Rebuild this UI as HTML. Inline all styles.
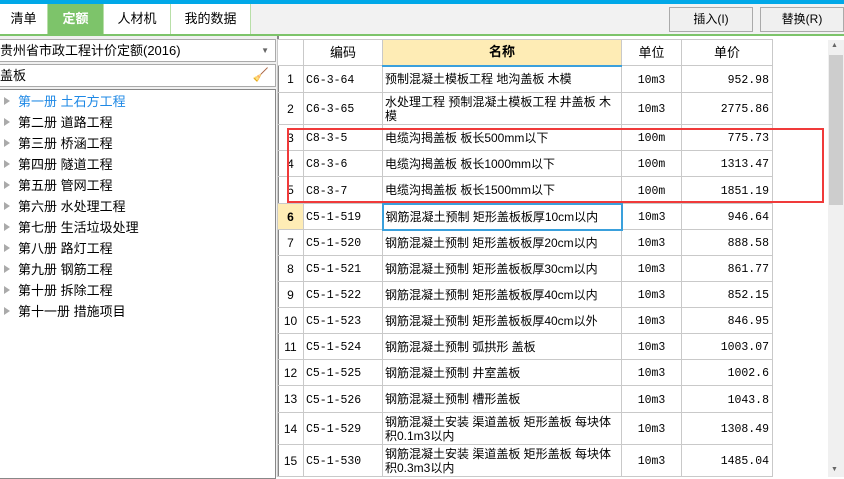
<!DOCTYPE html><html><head><meta charset="utf-8"><style>
*{box-sizing:border-box;margin:0;padding:0}
body{width:844px;height:477px;overflow:hidden;background:#fff;font-family:"Liberation Sans","Noto Sans CJK SC",sans-serif;font-size:13px;color:#000;position:relative}
.a{position:absolute}
.tab{position:absolute;top:4px;height:30px;line-height:30px;text-align:center;font-size:13px;border-right:1px solid #b8dfa8}
table{border-collapse:collapse;table-layout:fixed;position:absolute;left:277px;top:39px;font-size:12px}
td{border:1px solid #c9c9c9;padding:0 2px;overflow:hidden;line-height:14px;vertical-align:middle}
td.n{text-align:center}
td.c{font-family:"Liberation Mono","Noto Sans CJK SC",monospace;font-size:11.5px;padding-top:3px}
td.u{text-align:center;font-family:"Liberation Mono",monospace;font-size:11.5px;padding-top:3px}
td.p{text-align:right;font-family:"Liberation Mono",monospace;font-size:11.5px;padding-right:3px;padding-top:3px}
.tr{position:absolute;left:4px;height:21px;line-height:21px;font-size:13px}
.tr::before{content:"";display:inline-block;width:0;height:0;border-left:6px solid #aaa;border-top:4px solid transparent;border-bottom:4px solid transparent;margin-right:8px;vertical-align:1px}
</style></head><body>
<div class="a" style="left:0;top:0;width:844px;height:4px;background:#00a8e8"></div>
<div class="a" style="left:0;top:4px;width:844px;height:30px;background:#f2f2f2"></div>
<div class="a" style="left:0;top:34px;width:844px;height:2px;background:#7dc46a"></div>
<div class="tab" style="left:0;width:48px;background:#fff">清单</div>
<div class="tab" style="left:48px;width:56px;background:#7dc46a;color:#fff;font-weight:bold">定额</div>
<div class="tab" style="left:104px;width:67px;background:#fff">人材机</div>
<div class="tab" style="left:171px;width:80px;background:#fff">我的数据</div>
<div class="a" style="left:669px;top:7px;width:84px;height:25px;border:1px solid #aaa;background:#f0f0f0;text-align:center;line-height:23px;font-size:12px">插入(I)</div>
<div class="a" style="left:760px;top:7px;width:84px;height:25px;border:1px solid #aaa;background:#f0f0f0;text-align:center;line-height:23px;font-size:12px">替换(R)</div>
<div class="a" style="left:0;top:36px;width:277px;height:441px;background:#f0f0f0"></div>
<div class="a" style="left:-1px;top:39px;width:277px;height:23px;border:1px solid #aaa;background:#fff;line-height:21px;font-size:13px">贵州省市政工程计价定额(2016)<span style="position:absolute;right:6px;top:0;font-size:8px;color:#666">▼</span></div>
<div class="a" style="left:-1px;top:64px;width:277px;height:23px;border:1px solid #aaa;background:#fff;line-height:21px;font-size:13px">盖板<span style="position:absolute;right:6px;top:-1px;color:#b07a2a">🧹</span></div>
<div class="a" style="left:-1px;top:89px;width:277px;height:390px;border:1px solid #888;background:#fff"></div>
<div class="tr" style="top:91px;color:#1e88e5">第一册 土石方工程</div>
<div class="tr" style="top:112px">第二册 道路工程</div>
<div class="tr" style="top:133px">第三册 桥涵工程</div>
<div class="tr" style="top:154px">第四册 隧道工程</div>
<div class="tr" style="top:175px">第五册 管网工程</div>
<div class="tr" style="top:196px">第六册 水处理工程</div>
<div class="tr" style="top:217px">第七册 生活垃圾处理</div>
<div class="tr" style="top:238px">第八册 路灯工程</div>
<div class="tr" style="top:259px">第九册 钢筋工程</div>
<div class="tr" style="top:280px">第十册 拆除工程</div>
<div class="tr" style="top:301px">第十一册 措施项目</div>
<div class="a" style="left:277px;top:36px;width:567px;height:441px;background:#fff;border-left:2px solid #888"></div>
<table>
<colgroup><col style="width:26px"><col style="width:79px"><col style="width:239px"><col style="width:60px"><col style="width:91px"></colgroup>
<tr style="height:26px;font-size:13px"><td class="n" style="background:#fff"></td><td class="n">编码</td><td class="n" style="background:#feecb5;font-weight:bold;border-bottom:2px solid #3aa0dc">名称</td><td class="n">单位</td><td class="n">单价</td></tr>
<tr style="height:27px"><td class="n">1</td><td class="c">C6-3-64</td><td>预制混凝土模板工程 地沟盖板 木模</td><td class="u">10m3</td><td class="p">952.98</td></tr>
<tr style="height:32px"><td class="n">2</td><td class="c">C6-3-65</td><td>水处理工程 预制混凝土模板工程 井盖板 木模</td><td class="u">10m3</td><td class="p">2775.86</td></tr>
<tr style="height:26px"><td class="n">3</td><td class="c">C8-3-5</td><td>电缆沟揭盖板 板长500mm以下</td><td class="u">100m</td><td class="p">775.73</td></tr>
<tr style="height:26px"><td class="n">4</td><td class="c">C8-3-6</td><td>电缆沟揭盖板 板长1000mm以下</td><td class="u">100m</td><td class="p">1313.47</td></tr>
<tr style="height:27px"><td class="n">5</td><td class="c">C8-3-7</td><td>电缆沟揭盖板 板长1500mm以下</td><td class="u">100m</td><td class="p">1851.19</td></tr>
<tr style="height:26px"><td class="n" style="background:#feecb5;font-weight:bold">6</td><td class="c">C5-1-519</td><td style="border:2px solid #3aa0dc">钢筋混凝土预制 矩形盖板板厚10cm以内</td><td class="u">10m3</td><td class="p">946.64</td></tr>
<tr style="height:26px"><td class="n">7</td><td class="c">C5-1-520</td><td>钢筋混凝土预制 矩形盖板板厚20cm以内</td><td class="u">10m3</td><td class="p">888.58</td></tr>
<tr style="height:26px"><td class="n">8</td><td class="c">C5-1-521</td><td>钢筋混凝土预制 矩形盖板板厚30cm以内</td><td class="u">10m3</td><td class="p">861.77</td></tr>
<tr style="height:26px"><td class="n">9</td><td class="c">C5-1-522</td><td>钢筋混凝土预制 矩形盖板板厚40cm以内</td><td class="u">10m3</td><td class="p">852.15</td></tr>
<tr style="height:26px"><td class="n">10</td><td class="c">C5-1-523</td><td>钢筋混凝土预制 矩形盖板板厚40cm以外</td><td class="u">10m3</td><td class="p">846.95</td></tr>
<tr style="height:26px"><td class="n">11</td><td class="c">C5-1-524</td><td>钢筋混凝土预制 弧拱形 盖板</td><td class="u">10m3</td><td class="p">1003.07</td></tr>
<tr style="height:26px"><td class="n">12</td><td class="c">C5-1-525</td><td>钢筋混凝土预制 井室盖板</td><td class="u">10m3</td><td class="p">1002.6</td></tr>
<tr style="height:27px"><td class="n">13</td><td class="c">C5-1-526</td><td>钢筋混凝土预制 槽形盖板</td><td class="u">10m3</td><td class="p">1043.8</td></tr>
<tr style="height:32px"><td class="n">14</td><td class="c">C5-1-529</td><td>钢筋混凝土安装 渠道盖板 矩形盖板 每块体积0.1m3以内</td><td class="u">10m3</td><td class="p">1308.49</td></tr>
<tr style="height:32px"><td class="n">15</td><td class="c">C5-1-530</td><td>钢筋混凝土安装 渠道盖板 矩形盖板 每块体积0.3m3以内</td><td class="u">10m3</td><td class="p">1485.04</td></tr>
</table>
<div class="a" style="left:287px;top:128px;width:537px;height:75px;border:2px solid #f03a3a"></div>
<div class="a" style="left:828px;top:40px;width:16px;height:437px;background:#f0f0f0"></div>
<div class="a" style="left:829px;top:55px;width:14px;height:150px;background:#cdcdcd"></div>
<div class="a" style="left:831px;top:42px;font-size:7px;color:#666">▲</div>
<div class="a" style="left:831px;top:466px;font-size:7px;color:#666">▼</div>
</body></html>
